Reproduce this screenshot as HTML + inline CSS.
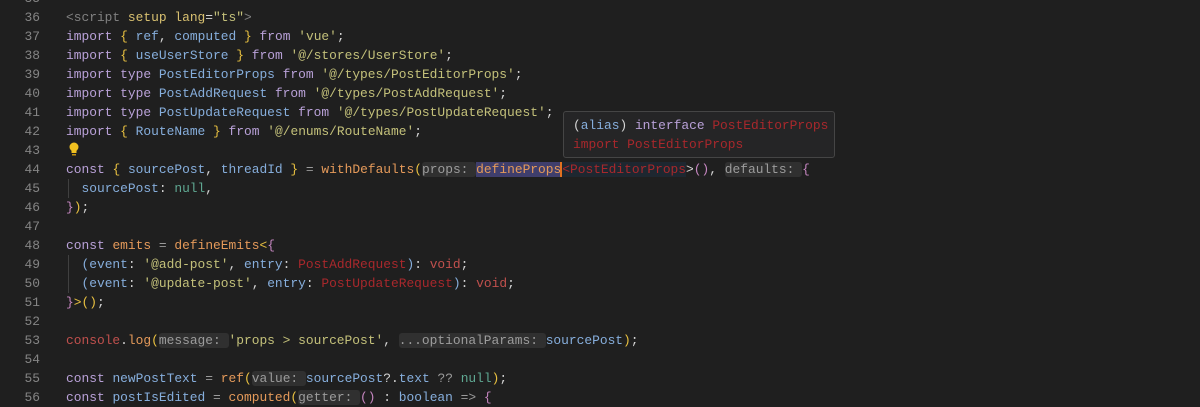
<!DOCTYPE html>
<html><head><meta charset="utf-8"><style>
body{margin:0;background:#1f1f1f;width:1200px;height:400px;overflow:hidden;position:relative;font-family:"Liberation Mono",monospace;font-size:12.9px;}
.ln{position:absolute;left:0;width:40px;text-align:right;color:#858585;height:19px;line-height:19px;}
.c{position:absolute;left:66px;height:19px;line-height:19px;color:#d4d4d4;white-space:pre;}
.k{color:#b9a1d8}.v{color:#86aedc}.s{color:#c3c07a}.b{color:#e8c040}.f{color:#e59a5a}.r{color:#a8282c}.n{color:#5fa892}.vd{color:#c0504d}.o{color:#9a9a9a}.g{color:#808080}.y{color:#d8c070}.p{color:#c586c0}
.h{background:#303030;color:#9c9c9c;border-radius:3px;font-size:12.9px}
.guide{position:absolute;left:68px;width:1px;background:#404040}
.tip{position:absolute;left:563px;top:111px;width:272px;height:47px;background:#252526;border:1px solid #454545;border-radius:3px;box-sizing:border-box;padding:4px 9px;line-height:19px;white-space:pre;}
</style></head><body>
<div class="ln" style="top:-11px">35</div>
<div class="ln" style="top:8px">36</div><div class="c" style="top:8px"><span class="g">&lt;script</span> <span class="y">setup</span> <span class="y">lang</span>=<span class="s">"ts"</span><span class="g">&gt;</span></div>
<div class="ln" style="top:27px">37</div><div class="c" style="top:27px"><span class="k">import</span> <span class="b">{</span> <span class="v">ref</span>, <span class="v">computed</span> <span class="b">}</span> <span class="k">from</span> <span class="s">'vue'</span>;</div>
<div class="ln" style="top:46px">38</div><div class="c" style="top:46px"><span class="k">import</span> <span class="b">{</span> <span class="v">useUserStore</span> <span class="b">}</span> <span class="k">from</span> <span class="s">'@/stores/UserStore'</span>;</div>
<div class="ln" style="top:65px">39</div><div class="c" style="top:65px"><span class="k">import</span> <span class="k">type</span> <span class="v">PostEditorProps</span> <span class="k">from</span> <span class="s">'@/types/PostEditorProps'</span>;</div>
<div class="ln" style="top:84px">40</div><div class="c" style="top:84px"><span class="k">import</span> <span class="k">type</span> <span class="v">PostAddRequest</span> <span class="k">from</span> <span class="s">'@/types/PostAddRequest'</span>;</div>
<div class="ln" style="top:103px">41</div><div class="c" style="top:103px"><span class="k">import</span> <span class="k">type</span> <span class="v">PostUpdateRequest</span> <span class="k">from</span> <span class="s">'@/types/PostUpdateRequest'</span>;</div>
<div class="ln" style="top:122px">42</div><div class="c" style="top:122px"><span class="k">import</span> <span class="b">{</span> <span class="v">RouteName</span> <span class="b">}</span> <span class="k">from</span> <span class="s">'@/enums/RouteName'</span>;</div>
<div class="ln" style="top:141px">43</div>
<svg style="position:absolute;left:68px;top:141px" width="12" height="16" viewBox="0 0 12 16"><circle cx="6" cy="6" r="4.5" fill="#f0c020"/><rect x="3.5" y="9" width="5" height="3" fill="#f0c020"/><rect x="4" y="13" width="4" height="1.5" fill="#c09010"/></svg>
<div class="ln" style="top:160px">44</div><div class="c" style="top:160px"><span class="k">const</span> <span class="b">{</span> <span class="v">sourcePost</span>, <span class="v">threadId</span> <span class="b">}</span> <span class="o">=</span> <span class="f">withDefaults</span><span class="b">(</span><span class="h">props: </span><span class="f" style="background:#3f3e6c">defineProps</span><span style="border-left:2px solid #e07020;margin-left:-1px"></span><span class="r" style="background:#1e2730">&lt;PostEditorProps</span>&gt;<span class="p">()</span>, <span class="h">defaults: </span><span class="p">{</span></div>
<div class="ln" style="top:179px">45</div><div class="c" style="top:179px">  <span class="v">sourcePost</span>: <span class="n">null</span>,</div>
<div class="ln" style="top:198px">46</div><div class="c" style="top:198px"><span class="p">}</span><span class="b">)</span>;</div>
<div class="ln" style="top:217px">47</div>
<div class="ln" style="top:236px">48</div><div class="c" style="top:236px"><span class="k">const</span> <span class="f">emits</span> <span class="o">=</span> <span class="f">defineEmits</span><span class="b">&lt;</span><span class="p">{</span></div>
<div class="ln" style="top:255px">49</div><div class="c" style="top:255px">  <span class="v">(event</span>: <span class="s">'@add-post'</span>, <span class="v">entry</span>: <span class="r">PostAddRequest</span><span class="v">)</span>: <span class="vd">void</span>;</div>
<div class="ln" style="top:274px">50</div><div class="c" style="top:274px">  <span class="v">(event</span>: <span class="s">'@update-post'</span>, <span class="v">entry</span>: <span class="r">PostUpdateRequest</span><span class="v">)</span>: <span class="vd">void</span>;</div>
<div class="ln" style="top:293px">51</div><div class="c" style="top:293px"><span class="p">}</span><span class="b">&gt;()</span>;</div>
<div class="ln" style="top:312px">52</div>
<div class="ln" style="top:331px">53</div><div class="c" style="top:331px"><span class="vd">console</span>.<span class="f">log</span><span class="b">(</span><span class="h">message: </span><span class="s">'props &gt; sourcePost'</span>, <span class="h">...optionalParams: </span><span class="v">sourcePost</span><span class="b">)</span>;</div>
<div class="ln" style="top:350px">54</div>
<div class="ln" style="top:369px">55</div><div class="c" style="top:369px"><span class="k">const</span> <span class="v">newPostText</span> <span class="o">=</span> <span class="f">ref</span><span class="b">(</span><span class="h">value: </span><span class="v">sourcePost</span>?.<span class="v">text</span> <span class="o">??</span> <span class="n">null</span><span class="b">)</span>;</div>
<div class="ln" style="top:388px">56</div><div class="c" style="top:388px"><span class="k">const</span> <span class="v">postIsEdited</span> <span class="o">=</span> <span class="f">computed</span><span class="b">(</span><span class="h">getter: </span><span class="p">()</span> : <span class="v">boolean</span> <span class="o">=&gt;</span> <span class="p">{</span></div>
<div class="guide" style="top:179px;height:19px"></div>
<div class="guide" style="top:255px;height:38px"></div>
<div class="tip"><span style="color:#d4d4d4">(</span><span class="v">alias</span><span style="color:#d4d4d4">)</span> <span class="k">interface</span> <span class="r">PostEditorProps</span>
<span class="r">import</span> <span class="r">PostEditorProps</span></div>
</body></html>
